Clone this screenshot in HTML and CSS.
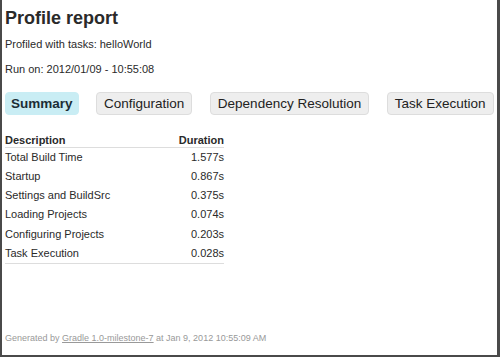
FILE: index.html
```html
<!DOCTYPE html>
<html lang="en">
<head>
    <meta charset="UTF-8">
    <title>Profile report</title>
    <link rel="stylesheet" href="styles.css">
</head>
<body>
    <div class="page">
        <h1>Profile report</h1>
        <p>Profiled with tasks: helloWorld</p>
        <p>Run on: 2012/01/09 - 10:55:08</p>

        <div class="tabs">
            <span class="tab selected">Summary</span>
            <span class="tab">Configuration</span>
            <span class="tab">Dependency Resolution</span>
            <span class="tab">Task Execution</span>
        </div>

        <table>
            <thead>
                <tr><th>Description</th><th class="num">Duration</th></tr>
            </thead>
            <tbody>
                <tr><td>Total Build Time</td><td class="num">1.577s</td></tr>
                <tr><td>Startup</td><td class="num">0.867s</td></tr>
                <tr><td>Settings and BuildSrc</td><td class="num">0.375s</td></tr>
                <tr><td>Loading Projects</td><td class="num">0.074s</td></tr>
                <tr><td>Configuring Projects</td><td class="num">0.203s</td></tr>
                <tr><td>Task Execution</td><td class="num">0.028s</td></tr>
            </tbody>
        </table>

        <div class="footer">
            Generated by <a href="#">Gradle 1.0-milestone-7</a> at Jan 9, 2012 10:55:09 AM
        </div>
    </div>
</body>
</html>
```

FILE: styles.css
```css
html, body {
    margin: 0;
    height: 100%;
}
body {
    font-family: "Liberation Sans", Arial, sans-serif;
    color: #2a2a2a;
    background: #fff;
}
.page {
    box-sizing: border-box;
    height: 357px;
    border-left: 2px solid #4a4a4a;
    border-right: 3px solid #4a4a4a;
    border-bottom: 2px solid #4a4a4a;
    padding: 4px 0 0 3px;
    display: flex;
    flex-direction: column;
}
h1 {
    font-size: 18px;
    margin: 3px 0 0 0;
    line-height: 22px;
}
p {
    font-size: 11px;
    margin: 9px 0 0 0;
    line-height: 13px;
}
p + p {
    margin-top: 12px;
}
.tabs {
    display: flex;
    gap: 17.5px;
    margin: 16px 0 0 0;
}
.tab {
    font-size: 13.5px;
    line-height: 21px;
    padding: 0 7px;
    background: #eee;
    border: 1px solid #ddd;
    border-radius: 4px;
    color: #222;
}
.tab.selected {
    background: #c9edf4;
    border-color: #c9edf4;
    font-weight: bold;
    padding: 0 5px;
    color: #1c2e36;
}
table {
    border-collapse: collapse;
    font-size: 11px;
    margin-top: 18.5px;
    width: 219px;
    border-bottom: 1px solid #ddd;
}
th {
    text-align: left;
    font-weight: bold;
    padding: 0;
    border-bottom: 1px solid #ddd;
    line-height: 13px;
}
td {
    padding: 0;
    line-height: 19.3px;
}
.num {
    text-align: right;
}
.footer {
    margin-top: auto;
    margin-bottom: 12px;
    font-size: 9px;
    color: #999;
}
.footer a {
    color: #999;
}
```
